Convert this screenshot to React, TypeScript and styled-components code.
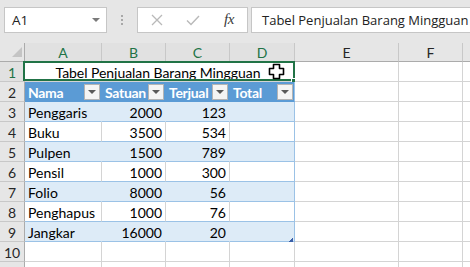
import React from "react";
import styled, { createGlobalStyle } from "styled-components";

const Global = createGlobalStyle`
  html, body { margin: 0; padding: 0; background: #fff; }
  body { width: 470px; height: 267px; overflow: hidden; }
`;

const GREEN = "#217346";
const GRID = "#d4d4d4";
const HEAD_SEP = "#c8c8c8";
const HEAD_EDGE = "#ababab";
const T_HEAD = "#5b9bd5";
const T_BAND = "#ddebf7";
const T_LINE = "#9bc2e6";

const Window = styled.div`
  width: 470px;
  height: 267px;
  overflow: hidden;
  background: #fff;
  display: flex;
  flex-direction: column;
`;

const FormulaBar = styled.div`
  height: 43px;
  flex-shrink: 0;
  box-sizing: border-box;
  background: #e6e6e6;
  display: flex;
  align-items: flex-start;
  padding: 7px 0 0 4px;
  overflow: hidden;
`;

const NameBox = styled.div`
  width: 103px;
  height: 26px;
  flex-shrink: 0;
  box-sizing: border-box;
  background: #fff;
  border: 1px solid #c6c6c6;
  display: flex;
  align-items: center;
  justify-content: space-between;
  padding: 0 6px 1px 7px;
  font-family: "Open Sans", sans-serif;
  font-size: 13.5px;
  color: #222;
`;

const SmallArrow = styled.span`
  width: 0;
  height: 0;
  border-left: 4px solid transparent;
  border-right: 4px solid transparent;
  border-top: 4px solid #7a7a7a;
`;

const Dots = styled.div`
  width: 30px;
  flex-shrink: 0;
  display: flex;
  flex-direction: column;
  align-items: center;
  gap: 2px;
  padding-top: 8px;
`;

const Dot = styled.span`
  width: 2px;
  height: 2px;
  background: #a8a8a8;
`;

const FxBox = styled.div`
  width: 111px;
  height: 26px;
  flex-shrink: 0;
  box-sizing: border-box;
  background: #fff;
  border: 1px solid #c6c6c6;
  display: flex;
  align-items: center;
  padding-left: 1px;
`;

const FxSlot = styled.span`
  width: 36px;
  height: 24px;
  display: flex;
  align-items: center;
  justify-content: center;
`;

const FxText = styled.span`
  font-family: "Liberation Serif", serif;
  font-style: italic;
  font-size: 15px;
  color: #3a3a3a;
  letter-spacing: -0.5px;
  padding-bottom: 2px;
`;

const FormulaText = styled.div`
  width: 300px;
  height: 26px;
  flex-shrink: 0;
  margin-left: 3px;
  box-sizing: border-box;
  background: #fff;
  border: 1px solid #c6c6c6;
  display: flex;
  align-items: center;
  padding: 0 0 1px 10px;
  font-family: "Open Sans", sans-serif;
  font-size: 13px;
  color: #222;
  white-space: nowrap;
`;

const Sheet = styled.div`
  display: grid;
  grid-template-columns: 25px 77px 64px 64px 65px 104px 64px 60px;
  grid-template-rows: 19px repeat(11, 20px);
  font-family: Lato, "Liberation Sans", sans-serif;
  font-size: 14px;
`;

const Corner = styled.div`
  box-sizing: border-box;
  background: #e6e6e6;
  border-right: 1px solid ${HEAD_EDGE};
  border-bottom: 1px solid ${HEAD_EDGE};
  display: flex;
  align-items: flex-end;
  justify-content: flex-end;
  padding: 0 2px 4px 0;
`;

const ColHead = styled.div<{ $sel?: boolean }>`
  box-sizing: border-box;
  background: ${(p) => (p.$sel ? "#e1e1e1" : "#e6e6e6")};
  border-right: 1px solid ${HEAD_SEP};
  border-bottom: 1px solid ${(p) => (p.$sel ? "#9a9a9a" : HEAD_EDGE)};
  color: ${(p) => (p.$sel ? GREEN : "#262626")};
  display: flex;
  align-items: center;
  justify-content: center;
  padding-top: 1px;
`;

const RowHead = styled.div<{ $sel?: boolean }>`
  box-sizing: border-box;
  background: ${(p) => (p.$sel ? "#e1e1e1" : "#e6e6e6")};
  border-right: 1px solid ${HEAD_EDGE};
  border-bottom: 1px solid ${HEAD_SEP};
  color: ${(p) => (p.$sel ? GREEN : "#262626")};
  display: flex;
  align-items: center;
  justify-content: center;
  padding-top: 2px;
`;

const Cell = styled.div<{ $bg?: string; $v?: string; $h?: string; $right?: boolean }>`
  position: relative;
  box-sizing: border-box;
  min-width: 0;
  white-space: nowrap;
  background: ${(p) => p.$bg ?? "#fff"};
  border-right: 1px solid ${(p) => p.$v ?? GRID};
  border-bottom: 1px solid ${(p) => p.$h ?? GRID};
  display: flex;
  align-items: center;
  justify-content: ${(p) => (p.$right ? "flex-end" : "flex-start")};
  padding: 2px 3px 0 3px;
  color: #000;
`;

const Merged = styled(Cell)`
  grid-column: 2 / span 4;
  justify-content: center;
  overflow: visible;
  padding-right: 6px;
  letter-spacing: -0.05px;
`;

const HeadCell = styled(Cell)`
  justify-content: space-between;
  padding: 0 1px 0 3px;
  color: #fff;
  font-weight: 700;
  letter-spacing: -0.3px;
`;

const HeadLabel = styled.span`
  padding-top: 2px;
`;

const FilterBtn = styled.span`
  width: 16px;
  height: 16px;
  flex-shrink: 0;
  box-sizing: border-box;
  border: 1px solid #b4b4b4;
  background: #f4f4f4;
  display: flex;
  align-items: center;
  justify-content: center;
  &::after {
    content: "";
    width: 0;
    height: 0;
    margin-top: 1px;
    border-left: 4px solid transparent;
    border-right: 4px solid transparent;
    border-top: 4px solid #595959;
  }
`;

const SelectionFrame = styled.span`
  position: absolute;
  left: -2px;
  top: -1px;
  right: -1px;
  bottom: 0;
  border: 2px solid ${GREEN};
  pointer-events: none;
`;

const FillHandle = styled.span`
  position: absolute;
  left: 267px;
  top: 17px;
  width: 5px;
  height: 5px;
  background: ${GREEN};
  box-shadow: 0 0 0 1px #fff;
`;

const CursorIcon = styled.svg`
  position: absolute;
  left: 243px;
  top: 1px;
`;

const ResizeMark = styled.svg`
  position: absolute;
  right: 1px;
  bottom: -1px;
`;

const rows: [string, number, number][] = [
  ["Penggaris", 2000, 123],
  ["Buku", 3500, 534],
  ["Pulpen", 1500, 789],
  ["Pensil", 1000, 300],
  ["Folio", 8000, 56],
  ["Penghapus", 1000, 76],
  ["Jangkar", 16000, 20],
];

const cols = ["A", "B", "C", "D", "E", "F", "G"];
const title = "Tabel Penjualan Barang Mingguan";

function EmptyTail() {
  return (
    <>
      <Cell />
      <Cell />
      <Cell />
    </>
  );
}

export default function App() {
  return (
    <Window>
      <Global />
      <FormulaBar>
        <NameBox>
          <span>A1</span>
          <SmallArrow />
        </NameBox>
        <Dots>
          <Dot />
          <Dot />
          <Dot />
        </Dots>
        <FxBox>
          <FxSlot>
            <svg width="12" height="12" viewBox="0 0 12 12">
              <path d="M1 1 L11 11 M11 1 L1 11" stroke="#b9b9b9" strokeWidth="1.3" fill="none" />
            </svg>
          </FxSlot>
          <FxSlot>
            <svg width="14" height="11" viewBox="0 0 14 11">
              <path d="M1 5.5 L5 9.5 L13 1" stroke="#b9b9b9" strokeWidth="1.4" fill="none" />
            </svg>
          </FxSlot>
          <FxSlot>
            <FxText>fx</FxText>
          </FxSlot>
        </FxBox>
        <FormulaText>{title}</FormulaText>
      </FormulaBar>

      <Sheet>
        <Corner>
          <svg width="10" height="10" viewBox="0 0 10 10">
            <path d="M10 0 L10 10 L0 10 Z" fill="#c4c4c4" />
          </svg>
        </Corner>
        {cols.map((c, i) => (
          <ColHead key={c} $sel={i < 4}>
            {i < 6 ? c : ""}
          </ColHead>
        ))}

        <RowHead $sel>1</RowHead>
        <Merged>
          {title}
          <SelectionFrame />
          <FillHandle />
          <CursorIcon width="17" height="17" viewBox="0 0 17 17">
            <path
              d="M5.5 1.5 H11.5 V5.5 H15.5 V11.5 H11.5 V15.5 H5.5 V11.5 H1.5 V5.5 H5.5 Z"
              fill="#fff"
              stroke="#000"
              strokeWidth="1.6"
              strokeLinejoin="round"
            />
          </CursorIcon>
        </Merged>
        <EmptyTail />

        <RowHead>2</RowHead>
        {["Nama", "Satuan", "Terjual", "Total"].map((h, i) => (
          <HeadCell key={h} $bg={T_HEAD} $h={T_HEAD} $v={i === 3 ? T_LINE : T_HEAD}>
            <HeadLabel>{h}</HeadLabel>
            <FilterBtn />
          </HeadCell>
        ))}
        <EmptyTail />

        {rows.map(([name, sat, ter], i) => {
          const band = i % 2 === 0;
          const bg = band ? T_BAND : "#fff";
          const v = band ? T_BAND : GRID;
          const last = i === rows.length - 1;
          return (
            <React.Fragment key={name}>
              <RowHead>{i + 3}</RowHead>
              <Cell $bg={bg} $v={v} $h={T_LINE}>
                {name}
              </Cell>
              <Cell $bg={bg} $v={v} $h={T_LINE} $right>
                {sat}
              </Cell>
              <Cell $bg={bg} $v={v} $h={T_LINE} $right>
                {ter}
              </Cell>
              <Cell $bg={bg} $v={T_LINE} $h={T_LINE}>
                {last && (
                  <ResizeMark width="4" height="4" viewBox="0 0 4 4">
                    <path d="M3 0 H4 V4 H0 V3 H1 V2 H2 V1 H3 Z" fill="#3a5fa8" />
                  </ResizeMark>
                )}
              </Cell>
              <EmptyTail />
            </React.Fragment>
          );
        })}

        {[10, 11].map((n) => (
          <React.Fragment key={n}>
            <RowHead>{n === 10 ? n : ""}</RowHead>
            <Cell />
            <Cell />
            <Cell />
            <Cell />
            <EmptyTail />
          </React.Fragment>
        ))}
      </Sheet>
    </Window>
  );
}
